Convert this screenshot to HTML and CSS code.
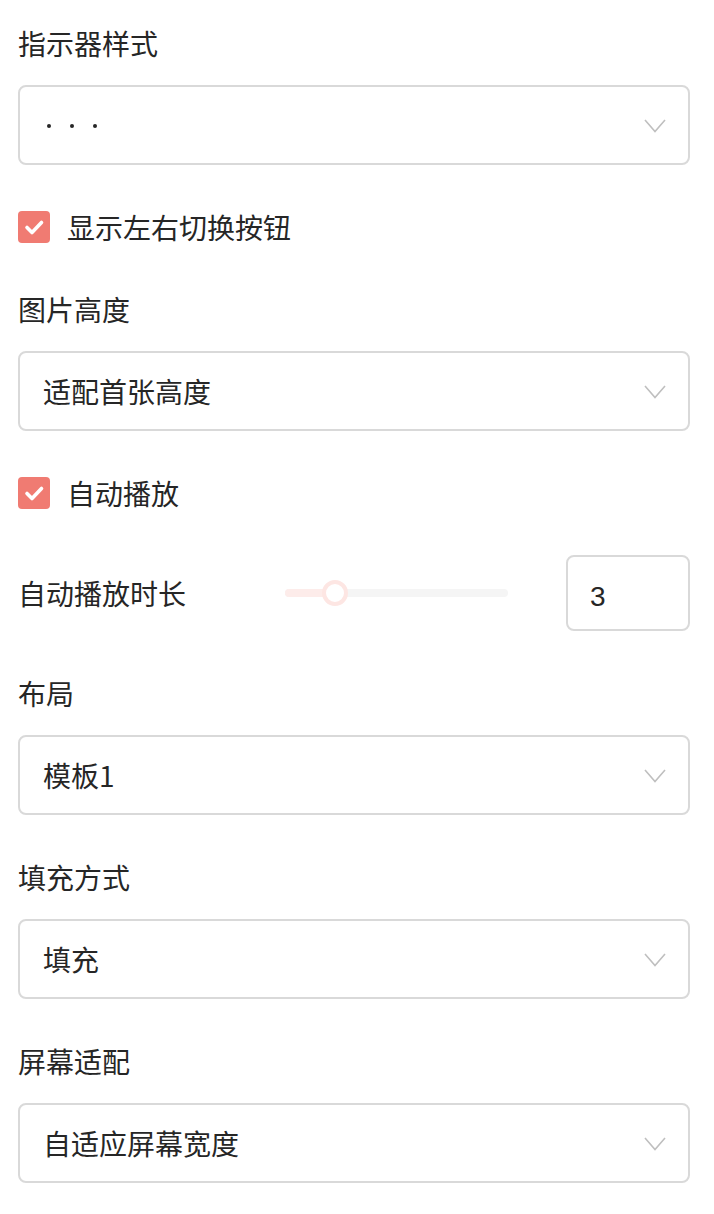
FILE: index.html
```html
<!DOCTYPE html>
<html lang="zh">
<head>
<meta charset="utf-8">
<link rel="stylesheet" href="styles.css">
</head>
<body>
<div class="panel">
  <div class="field">
    <div class="label">指示器样式</div>
    <div class="select">
      <span class="dots"><i></i><i></i><i></i></span>
      <svg class="chev" viewBox="0 0 22 14" width="22" height="14"><path d="M1 1 L11 12.5 L21 1" fill="none" stroke="#bfbfbf" stroke-width="1.6"/></svg>
    </div>
  </div>
  <div class="check-row">
    <span class="checkbox"><svg viewBox="0 0 32 32" width="32" height="32"><path d="M9 16.5 L14 21.5 L23.5 11.5" fill="none" stroke="#fff" stroke-width="3.6" stroke-linecap="round" stroke-linejoin="round"/></svg></span>
    <span class="check-text">显示左右切换按钮</span>
  </div>
  <div class="field">
    <div class="label">图片高度</div>
    <div class="select">
      <span class="value">适配首张高度</span>
      <svg class="chev" viewBox="0 0 22 14" width="22" height="14"><path d="M1 1 L11 12.5 L21 1" fill="none" stroke="#bfbfbf" stroke-width="1.6"/></svg>
    </div>
  </div>
  <div class="check-row">
    <span class="checkbox"><svg viewBox="0 0 32 32" width="32" height="32"><path d="M9 16.5 L14 21.5 L23.5 11.5" fill="none" stroke="#fff" stroke-width="3.6" stroke-linecap="round" stroke-linejoin="round"/></svg></span>
    <span class="check-text">自动播放</span>
  </div>
  <div class="slider-row">
    <span class="slider-label">自动播放时长</span>
    <div class="slider">
      <div class="track"><div class="fill"></div></div>
      <div class="thumb"></div>
    </div>
    <div class="num-input">3</div>
  </div>
  <div class="field">
    <div class="label">布局</div>
    <div class="select">
      <span class="value">模板1</span>
      <svg class="chev" viewBox="0 0 22 14" width="22" height="14"><path d="M1 1 L11 12.5 L21 1" fill="none" stroke="#bfbfbf" stroke-width="1.6"/></svg>
    </div>
  </div>
  <div class="field">
    <div class="label">填充方式</div>
    <div class="select">
      <span class="value">填充</span>
      <svg class="chev" viewBox="0 0 22 14" width="22" height="14"><path d="M1 1 L11 12.5 L21 1" fill="none" stroke="#bfbfbf" stroke-width="1.6"/></svg>
    </div>
  </div>
  <div class="field">
    <div class="label">屏幕适配</div>
    <div class="select">
      <span class="value">自适应屏幕宽度</span>
      <svg class="chev" viewBox="0 0 22 14" width="22" height="14"><path d="M1 1 L11 12.5 L21 1" fill="none" stroke="#bfbfbf" stroke-width="1.6"/></svg>
    </div>
  </div>
</div>
</body>
</html>
```

FILE: styles.css
```css
html, body {
  margin: 0;
  padding: 0;
  background: #fff;
}
body {
  font-family: "Noto Sans CJK SC", "Liberation Sans", sans-serif;
  color: #262626;
  font-size: 28px;
}
.panel {
  display: flex;
  flex-direction: column;
  gap: 42px;
  padding: 23px 24px 30px 18px;
}
.field {
  display: flex;
  flex-direction: column;
  gap: 22px;
}
.label {
  height: 40px;
  line-height: 40px;
}
.select {
  box-sizing: border-box;
  height: 80px;
  border: 2px solid #d9d9d9;
  border-radius: 8px;
  display: flex;
  align-items: center;
  justify-content: space-between;
  padding: 0 22px 0 23px;
}
.value {
  line-height: 40px;
}
.chev {
  display: block;
  margin-top: 2px;
}
.dots {
  display: flex;
  gap: 19px;
  padding-left: 4px;
  margin-top: 2px;
}
.dots i {
  display: block;
  width: 4px;
  height: 4px;
  border-radius: 50%;
  background: #262626;
}
.check-row {
  display: flex;
  align-items: center;
  height: 40px;
  gap: 17px;
}
.checkbox {
  width: 32px;
  height: 32px;
  border-radius: 4px;
  background: #f07b72;
  display: block;
}
.checkbox svg {
  display: block;
}
.check-text {
  line-height: 40px;
}
.slider-row {
  display: flex;
  align-items: center;
  height: 76px;
}
.slider-label {
  width: 267px;
  line-height: 40px;
}
.slider {
  position: relative;
  width: 223px;
  height: 30px;
  display: flex;
  align-items: center;
}
.track {
  width: 100%;
  height: 8px;
  border-radius: 4px;
  background: #f5f5f5;
  overflow: hidden;
}
.fill {
  width: 50px;
  height: 100%;
  background: #fdecea;
}
.thumb {
  position: absolute;
  left: 37px;
  top: 2px;
  box-sizing: border-box;
  width: 26px;
  height: 26px;
  border-radius: 50%;
  background: #fff;
  border: 4px solid #fde6e3;
}
.num-input {
  box-sizing: border-box;
  margin-left: auto;
  width: 124px;
  height: 76px;
  border: 2px solid #d9d9d9;
  border-radius: 8px;
  font-family: "Liberation Sans", "Noto Sans CJK SC", sans-serif;
  font-size: 28px;
  display: flex;
  align-items: center;
  padding: 8px 0 0 22px;
}
```
